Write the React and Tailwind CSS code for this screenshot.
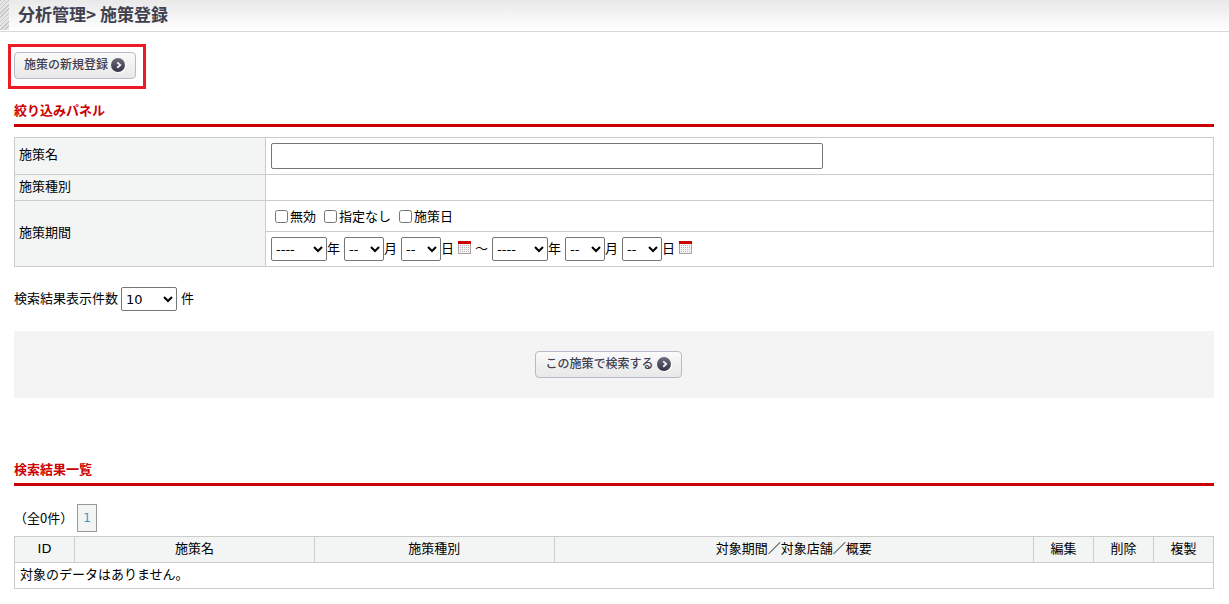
import { useId } from 'react';

const cell = 'border border-[#cccccc] px-[5px]';
const head = 'border border-[#cccccc] bg-[#f3f5f4] font-normal';
const box = 'h-6 rounded-[2px] border border-[#767676] bg-white';

function Arrow() {
  return (
    <svg className="size-[15px] shrink-0" viewBox="0 0 15 15" aria-hidden="true">
      <defs>
        <linearGradient id="disc" x1="0" y1="0" x2="0" y2="1">
          <stop offset="0" stopColor="#6b6b7c" />
          <stop offset="1" stopColor="#343446" />
        </linearGradient>
      </defs>
      <circle cx="8" cy="8" r="7" fill="#ffffff" />
      <circle cx="7" cy="7" r="7" fill="url(#disc)" />
      <path d="M6.2 4.4 9.2 7.1 6.2 9.8" fill="none" stroke="#f0f0f3" strokeWidth="1.9" />
    </svg>
  );
}

function PushButton({ children }) {
  return (
    <button
      type="button"
      className="flex h-[27px] items-center gap-[3px] rounded-[4px] border border-[#b9b9cb] bg-linear-to-b from-[#fafafa] to-[#e8e8e8] px-[9px] text-[12px] leading-4 font-medium text-[#40404f]"
    >
      <span className="pb-px">{children}</span>
      <Arrow />
    </button>
  );
}

function SectionTitle({ children }) {
  return (
    <h2 className="border-b-3 border-[#cc0000] pt-1 pb-[3px] text-[13px] leading-5 font-bold text-[#cc0000]">
      {children}
    </h2>
  );
}

function CalendarButton({ label }) {
  return (
    <button type="button" aria-label={label} className="mb-1">
      <svg className="block h-[13px] w-[13px]" viewBox="0 0 13 13" shapeRendering="crispEdges">
        <rect x="0" y="0" width="13" height="13" fill="#aaa0a0" />
        <rect x="1" y="3" width="11" height="9" fill="#f4f4f4" />
        <rect x="0" y="0" width="13" height="3" fill="#cc0000" />
        {[4, 6, 8, 10].map((y) => (
          <path key={y} d={`M2 ${y}.5H12`} stroke="#b8b8b8" strokeDasharray="1 1" />
        ))}
      </svg>
    </button>
  );
}

function Part({ name, unit, blank, options, width }) {
  const id = useId();
  return (
    <span className="flex items-center">
      <select id={id} aria-label={name} className={`${box} ${width}`}>
        <option>{blank}</option>
        {options.map((o) => (
          <option key={o}>{o}</option>
        ))}
      </select>
      <label htmlFor={id}>{unit}</label>
    </span>
  );
}

const range = (from, to) => Array.from({ length: to - from + 1 }, (_, i) => from + i);

function DateFields({ name }) {
  return (
    <span className="flex items-center gap-1">
      <Part name={`${name} 年`} unit="年" blank="----" options={range(2015, 2030)} width="w-14" />
      <Part name={`${name} 月`} unit="月" blank="--" options={range(1, 12)} width="w-10" />
      <Part name={`${name} 日`} unit="日" blank="--" options={range(1, 31)} width="w-10" />
      <CalendarButton label={`${name} カレンダー`} />
    </span>
  );
}

function Check({ children }) {
  return (
    <label className="flex items-center gap-[2px]">
      <input type="checkbox" className="mb-[2px] size-[13px]" />
      {children}
    </label>
  );
}

const columns = ['ID', '施策名', '施策種別', '対象期間／対象店舗／概要', '編集', '削除', '複製'];

export default function App() {
  return (
    <div className="min-h-screen bg-white font-['DejaVu_Sans','Noto_Sans_CJK_JP',sans-serif] text-[13px] leading-4 text-black">
      <header className="flex h-8 border-b border-[#d8d8d8] bg-linear-to-b from-[#e9e9e9] to-white">
        <div className="mb-px w-[9px] bg-[repeating-linear-gradient(135deg,#c6c6c6_0px,#c6c6c6_1px,#e6e6e6_1px,#e6e6e6_3px)]" />
        <h1 className="pt-1 pl-[9px] font-['Noto_Sans_CJK_JP',sans-serif] text-[17px] leading-5 font-bold text-[#40404f]">
          分析管理&gt; 施策登録
        </h1>
      </header>

      <main className="pr-[15px] pb-4 pl-[14px]">
        <div className="mt-3 -ml-[6px] w-fit border-3 border-[#ed1c24] pt-[5px] pr-[7px] pb-[7px] pl-[3px]">
          <PushButton>施策の新規登録</PushButton>
        </div>

        <section className="mt-2">
          <SectionTitle>絞り込みパネル</SectionTitle>
          <table className="mt-[10px] w-full table-fixed border-collapse">
            <colgroup>
              <col className="w-[251px]" />
              <col />
            </colgroup>
            <tbody>
              <tr className="h-[37px]">
                <th className={`${head} px-1 pb-[2px] text-left`}>
                  <label htmlFor="measure-name">施策名</label>
                </th>
                <td className={cell}>
                  <input
                    id="measure-name"
                    type="text"
                    className="block h-[26px] w-[552px] max-w-full rounded-[2px] border border-[#767676] px-1"
                  />
                </td>
              </tr>
              <tr className="h-[26px]">
                <th className={`${head} px-1 pb-[2px] text-left`}>施策種別</th>
                <td className={cell} />
              </tr>
              <tr className="h-[31px]">
                <th rowSpan={2} className={`${head} px-1 pb-[2px] text-left`}>
                  施策期間
                </th>
                <td className={`${cell} pt-[2px]`}>
                  <div className="flex gap-2 pl-1">
                    <Check>無効</Check>
                    <Check>指定なし</Check>
                    <Check>施策日</Check>
                  </div>
                </td>
              </tr>
              <tr className="h-[35px]">
                <td className={cell}>
                  <div className="flex items-center gap-1">
                    <DateFields name="開始" />
                    <span>～</span>
                    <DateFields name="終了" />
                  </div>
                </td>
              </tr>
            </tbody>
          </table>
        </section>

        <div className="mt-5 flex items-center gap-[3px]">
          <label htmlFor="page-size">検索結果表示件数</label>
          <select id="page-size" defaultValue="10" className={`${box} w-14`}>
            <option>10</option>
            <option>20</option>
            <option>50</option>
          </select>
          <span className="pl-px">件</span>
        </div>

        <div className="mt-5 flex justify-center bg-[#f4f4f4] py-5 pr-[11px]">
          <PushButton>この施策で検索する</PushButton>
        </div>

        <section className="mt-[58px]">
          <SectionTitle>検索結果一覧</SectionTitle>
          <div className="mt-[18px] flex items-center gap-1">
            <span className="w-[59px] font-['Noto_Sans_CJK_JP',sans-serif] whitespace-nowrap">（全0件）</span>
            <a
              href="#page-1"
              className="flex h-7 w-5 items-center justify-center border border-[#999999] bg-[#f3f5f4] text-[12px] text-[#3399cc]"
            >
              1
            </a>
          </div>
          <table className="mt-1 w-full table-fixed border-collapse">
            <colgroup>
              <col className="w-[60px]" />
              <col className="w-[20%]" />
              <col className="w-[20%]" />
              <col />
              <col className="w-[60px]" />
              <col className="w-[60px]" />
              <col className="w-[60px]" />
            </colgroup>
            <thead>
              <tr className="h-[26px]">
                {columns.map((c) => (
                  <th key={c} className={`${head} pb-px`}>
                    {c}
                  </th>
                ))}
              </tr>
            </thead>
            <tbody>
              <tr className="h-[26px]">
                <td colSpan={7} className={`${cell} pb-px`}>
                  対象のデータはありません。
                </td>
              </tr>
            </tbody>
          </table>
        </section>
      </main>
    </div>
  );
}
